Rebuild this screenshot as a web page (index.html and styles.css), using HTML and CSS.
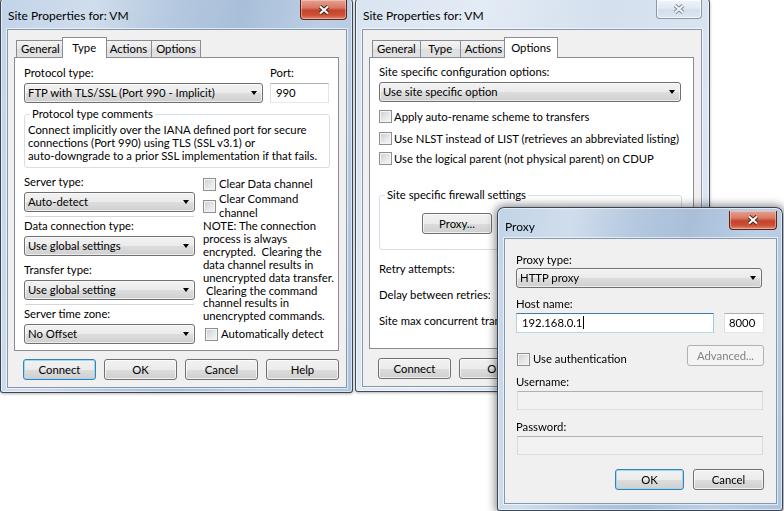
FILE: index.html
```html
<!DOCTYPE html>
<html lang="en">
<head>
    <meta charset="UTF-8">
    <meta name="viewport" content="width=device-width, initial-scale=1.0">
    <title>Site Properties for: VM</title>
    <link rel="stylesheet" href="styles.css">
</head>
<body>
    <div class="desktop">

        <!-- Type tab window -->
        <div class="window active win-type">
            <div class="titlebar">
                <span class="title">Site Properties for: VM</span>
                <span class="close-btn">
                    <svg width="12" height="10" viewBox="0 0 12 10"><path d="M2 1.5 L10 8.5 M10 1.5 L2 8.5" stroke="#4a1c14" stroke-width="4"/><path d="M2 1.5 L10 8.5 M10 1.5 L2 8.5" stroke="#fff" stroke-width="2.2"/></svg>
                </span>
            </div>
            <div class="client">
                <div class="tabs">
                    <span class="tab">General</span>
                    <span class="tab selected">Type</span>
                    <span class="tab">Actions</span>
                    <span class="tab">Options</span>
                </div>
                <div class="page">
                    <div class="row">
                        <div class="field protocol">
                            <div class="label">Protocol type:</div>
                            <div class="combo">FTP with TLS/SSL (Port 990 - Implicit)</div>
                        </div>
                        <div class="field port">
                            <div class="label">Port:</div>
                            <div class="edit">990</div>
                        </div>
                    </div>

                    <fieldset class="group comments">
                        <legend>Protocol type comments</legend>
                        <p>Connect implicitly over the IANA defined port for secure<br>connections (Port 990) using TLS (SSL v3.1) or<br>auto-downgrade to a prior SSL implementation if that fails.</p>
                    </fieldset>

                    <div class="split">
                        <div class="col-left">
                            <div class="field">
                                <div class="label">Server type:</div>
                                <div class="combo rule">Auto-detect</div>
                            </div>
                            <div class="field">
                                <div class="label">Data connection type:</div>
                                <div class="combo">Use global settings</div>
                            </div>
                            <div class="field">
                                <div class="label">Transfer type:</div>
                                <div class="combo rule">Use global setting</div>
                            </div>
                            <div class="field">
                                <div class="label">Server time zone:</div>
                                <div class="combo">No Offset</div>
                            </div>
                        </div>
                        <div class="col-right">
                            <div class="check-row"><span class="check"></span><span>Clear Data channel</span></div>
                            <div class="check-row two"><span class="check"></span><span>Clear Command<br>channel</span></div>
                            <p class="note">NOTE: The connection<br>process is always<br>encrypted.&nbsp; Clearing the<br>data channel results in<br>unencrypted data transfer.<br>&nbsp;Clearing the command<br>channel results in<br>unencrypted commands.</p>
                            <div class="check-row auto"><span class="check"></span><span>Automatically detect</span></div>
                        </div>
                    </div>
                </div>
                <div class="buttons">
                    <span class="btn default">Connect</span>
                    <span class="btn">OK</span>
                    <span class="btn">Cancel</span>
                    <span class="btn">Help</span>
                </div>
            </div>
        </div>

        <!-- Options tab window -->
        <div class="window inactive win-options">
            <div class="titlebar">
                <span class="title">Site Properties for: VM</span>
                <span class="close-btn">
                    <svg width="12" height="10" viewBox="0 0 12 10"><path d="M2 1.5 L10 8.5 M10 1.5 L2 8.5" stroke="#7d8898" stroke-width="4"/><path d="M2 1.5 L10 8.5 M10 1.5 L2 8.5" stroke="#eef2f7" stroke-width="2.2"/></svg>
                </span>
            </div>
            <div class="client">
                <div class="tabs">
                    <span class="tab">General</span>
                    <span class="tab">Type</span>
                    <span class="tab">Actions</span>
                    <span class="tab selected">Options</span>
                </div>
                <div class="page page-options">
                    <div class="label">Site specific configuration options:</div>
                    <div class="combo wide">Use site specific option</div>
                    <div class="check-row opt"><span class="check"></span><span>Apply auto-rename scheme to transfers</span></div>
                    <div class="check-row opt"><span class="check"></span><span>Use NLST instead of LIST (retrieves an abbreviated listing)</span></div>
                    <div class="check-row opt last"><span class="check"></span><span>Use the logical parent (not physical parent) on CDUP</span></div>

                    <fieldset class="group firewall">
                        <legend>Site specific firewall settings</legend>
                        <div class="fw-buttons">
                            <span class="btn">Proxy...</span>
                            <span class="btn"></span>
                        </div>
                    </fieldset>

                    <div class="label retry">Retry attempts:</div>
                    <div class="label retry">Delay between retries:</div>
                    <div class="label retry">Site max concurrent tran</div>
                </div>
                <div class="buttons">
                    <span class="btn">Connect</span>
                    <span class="btn">OK</span>
                    <span class="btn"></span>
                    <span class="btn"></span>
                </div>
            </div>
        </div>

        <!-- Proxy dialog -->
        <div class="window active win-proxy">
            <div class="titlebar">
                <span class="title">Proxy</span>
                <span class="close-btn">
                    <svg width="12" height="10" viewBox="0 0 12 10"><path d="M2 1.5 L10 8.5 M10 1.5 L2 8.5" stroke="#4a1c14" stroke-width="4"/><path d="M2 1.5 L10 8.5 M10 1.5 L2 8.5" stroke="#fff" stroke-width="2.2"/></svg>
                </span>
            </div>
            <div class="client proxy-client">
                <div class="label">Proxy type:</div>
                <div class="combo">HTTP proxy</div>

                <div class="label host-label">Host name:</div>
                <div class="host-row">
                    <div class="edit host focus">192.168.0.1<span class="caret"></span></div>
                    <div class="edit port-edit">8000</div>
                </div>

                <div class="auth-row">
                    <div class="check-row"><span class="check"></span><span>Use authentication</span></div>
                    <span class="btn disabled">Advanced...</span>
                </div>

                <div class="label user-label">Username:</div>
                <div class="edit disabled"></div>
                <div class="label pass-label">Password:</div>
                <div class="edit disabled"></div>

                <div class="buttons proxy-buttons">
                    <span class="btn default ok">OK</span>
                    <span class="btn cancel">Cancel</span>
                </div>
            </div>
        </div>

    </div>
</body>
</html>
```

FILE: styles.css
```css
* {
  box-sizing: border-box;
}

body {
  margin: 0;
  width: 784px;
  height: 511px;
  overflow: hidden;
  background-color: #fff;
  font-family: "Lato", "Liberation Sans", sans-serif;
  font-size: 11.3px;
  color: #000;
}

.desktop {
  position: relative;
  width: 784px;
  height: 511px;
}

/* 창 프레임 */
.window {
  position: absolute;
  display: flex;
  flex-direction: column;
  padding: 0 5px 4px 6px;
  border: 1px solid rgba(25, 35, 50, 0.8);
  border-radius: 7px 7px 3px 3px;
  box-shadow: inset 0 0 0 1px rgba(255, 255, 255, 0.55), 0 1px 3px rgba(0, 0, 0, 0.3);
}

.window.active {
  background: linear-gradient(100deg, #c2d4e8 0%, #d0ddec 22%, #b4c8df 42%, #a9bfd9 58%, #bccfe5 78%, #aec4dd 100%);
}

.window.inactive {
  background: linear-gradient(100deg, #d9e4f1 0%, #e3ebf5 30%, #d4e0ee 60%, #dce6f2 100%);
}

.win-type {
  left: 0;
  top: -4px;
  width: 353px;
  height: 397px;
}

.win-options {
  left: 355px;
  top: -4px;
  width: 355px;
  height: 396px;
  padding-right: 7px;
}

.win-proxy {
  left: 497px;
  top: 207px;
  width: 286px;
  height: 304px;
  padding-bottom: 6px;
  background: linear-gradient(100deg, rgba(186, 206, 230, 0.8) 0%, rgba(204, 219, 237, 0.78) 35%, rgba(178, 198, 223, 0.82) 65%, rgba(196, 212, 232, 0.85) 100%);
  backdrop-filter: blur(3px);
  box-shadow: inset 0 0 0 1px rgba(255, 255, 255, 0.55), 0 0 9px 2px rgba(0, 0, 0, 0.45);
}

.titlebar {
  display: flex;
  align-items: flex-start;
  height: 32px;
  flex: none;
}

.win-proxy .titlebar {
  height: 30px;
}

.title {
  margin: 11px 0 0 1px;
  font-size: 12px;
  line-height: 15px;
  white-space: nowrap;
}

.close-btn {
  display: flex;
  align-items: center;
  justify-content: center;
  margin-left: auto;
  margin-top: 3px;
  width: 47px;
  height: 20px;
  border: 1px solid #5e2318;
  border-top: none;
  border-radius: 0 0 4px 4px;
  background: linear-gradient(#e6a192 0%, #d67a64 40%, #c5432b 55%, #cb5136 80%, #dd8a70 100%);
  box-shadow: inset 0 0 0 1px rgba(255, 220, 210, 0.45);
}

.inactive .close-btn {
  width: 46px;
  height: 19px;
  border-color: #8a97a8;
  background: linear-gradient(#f1f5fa 0%, #e1e9f3 45%, #d3deeb 55%, #dde6f1 100%);
  box-shadow: inset 0 0 0 1px rgba(255, 255, 255, 0.7);
}

.win-proxy .close-btn {
  width: 48px;
  height: 19px;
}

/* 클라이언트 영역 */
.client {
  flex: 1;
  display: flex;
  flex-direction: column;
  padding: 7px 7px 0 6px;
  background-color: #f0f0f0;
  border: 1px solid #8597ad;
  box-shadow: 0 0 0 1px rgba(255, 255, 255, 0.6);
}

.tabs {
  display: flex;
  align-items: flex-end;
  height: 21px;
  padding-left: 2px;
  margin-bottom: -1px;
  position: relative;
  z-index: 1;
  flex: none;
}

.win-options .tabs {
  padding-left: 3px;
}

.tab {
  min-width: 41px;
  height: 17px;
  margin-bottom: 1px;
  margin-right: -1px;
  padding: 0 4px;
  line-height: 16px;
  text-align: center;
  border: 1px solid #898c95;
  border-bottom: none;
  background: linear-gradient(#f4f4f4 0%, #e8e8e8 50%, #dedede 51%, #e2e2e2 100%);
  white-space: nowrap;
}

.tab.selected {
  min-width: 45px;
  height: 21px;
  margin: 0 -2px 0 -2px;
  padding: 0 6px;
  line-height: 19px;
  background: #fff;
  position: relative;
  z-index: 1;
}

.page {
  flex: none;
  height: 294px;
  padding: 7px 9px 0 9px;
  background-color: #fff;
  border: 1px solid #898c95;
}

.page-options {
  height: 292px;
  padding-top: 6px;
}

.label {
  line-height: 15px;
  white-space: nowrap;
}

.row {
  display: flex;
  gap: 7px;
}

.protocol {
  width: 239px;
}

.port {
  width: 59px;
}

/* 콤보박스 */
.combo {
  position: relative;
  height: 20px;
  margin-top: 3px;
  padding-left: 3px;
  line-height: 18px;
  white-space: nowrap;
  border: 1px solid #707070;
  border-radius: 3px;
  background: linear-gradient(#f2f2f2 0%, #ebebeb 50%, #dddddd 51%, #cfcfcf 100%);
  box-shadow: inset 0 0 0 1px rgba(255, 255, 255, 0.6);
}

.combo::after {
  content: "";
  position: absolute;
  right: 5px;
  top: 7px;
  border-left: 3.5px solid transparent;
  border-right: 3.5px solid transparent;
  border-top: 4px solid #000;
}

.combo.rule::before {
  content: "";
  position: absolute;
  left: 0;
  right: 0;
  bottom: -6px;
  height: 1px;
  background-color: #d6d6d6;
}

.combo.wide {
  width: 302px;
}

.edit {
  height: 20px;
  margin-top: 3px;
  padding-left: 5px;
  line-height: 18px;
  white-space: nowrap;
  background-color: #fff;
  border: 1px solid;
  border-color: #abadb3 #e2e3ea #e3e9ef #dbdfe6;
}

/* 그룹박스 */
.group {
  margin: 0;
  min-width: 0;
  padding: 0 3px 5px 3px;
  border: 1px solid #d5dfe5;
  border-radius: 3px;
}

.group legend {
  padding: 0 2px;
  margin-left: 2px;
  line-height: 14px;
}

.comments {
  width: 306px;
  margin-top: 4px;
}

.comments p {
  margin: 2px 0 0;
  line-height: 13px;
  white-space: nowrap;
}

.split {
  display: flex;
  gap: 8px;
  margin-top: 6px;
}

.col-left {
  width: 171px;
  flex: none;
}

.col-left .field + .field {
  margin-top: 6px;
}

.col-right {
  flex: 1;
  padding-top: 3px;
}

/* 체크박스 */
.check-row {
  display: flex;
  align-items: center;
  gap: 3px;
  line-height: 14px;
  white-space: nowrap;
}

.check {
  flex: none;
  width: 13px;
  height: 13px;
  border: 1px solid #8e8f8f;
  background: linear-gradient(135deg, #c9ccd1 0%, #e6e7e9 55%, #f6f6f6 100%);
  box-shadow: inset 0 0 0 1px #f4f4f4;
}

.check-row.two {
  margin-top: 1px;
}

.note {
  margin: 0;
  line-height: 12.9px;
  white-space: nowrap;
}

.check-row.auto {
  margin-top: 4px;
  padding-left: 2px;
}

.opt {
  gap: 2px;
  margin-top: 7px;
  line-height: 15px;
}

.opt.last {
  margin-top: 5px;
}

.firewall {
  width: 303px;
  margin-top: 22px;
  padding-bottom: 15px;
}

.fw-buttons {
  display: flex;
  gap: 71px;
  margin: 11px 0 0 39px;
}

.fw-buttons .btn {
  width: 70px;
}

.retry {
  margin-top: 11px;
}

/* 버튼 */
.buttons {
  display: flex;
  justify-content: flex-end;
  gap: 8px;
  margin-top: 8px;
}

.win-options .buttons {
  margin-top: 9px;
}

.btn {
  width: 73px;
  height: 21px;
  line-height: 19px;
  text-align: center;
  white-space: nowrap;
  border: 1px solid #707070;
  border-radius: 3px;
  background: linear-gradient(#f2f2f2 0%, #ebebeb 50%, #dddddd 51%, #cfcfcf 100%);
  box-shadow: inset 0 0 0 1px rgba(255, 255, 255, 0.7);
}

.btn.default {
  border-color: #3c7fb1;
  box-shadow: inset 0 0 0 1px #9ed8f6;
}

.btn.disabled {
  width: 77px;
  color: #838383;
  border-color: #adb2b5;
  background: #f4f4f4;
  box-shadow: none;
}

/* Proxy 대화상자 */
.proxy-client {
  padding: 13px 12px 0 11px;
}

.proxy-client .combo {
  width: 246px;
  margin-top: 1px;
}

.host-label {
  margin-top: 8px;
}

.host-row {
  display: flex;
  gap: 10px;
  margin-top: 2px;
}

.host-row .edit {
  margin-top: 0;
}

.host {
  width: 198px;
}

.edit.focus {
  border-color: #3d7bad #a4c9e3 #b7d9ed #b5cfe7;
}

.caret {
  display: inline-block;
  width: 1px;
  height: 13px;
  margin-left: 1px;
  vertical-align: -2px;
  background-color: #000;
}

.port-edit {
  width: 40px;
  padding-left: 4px;
}

.auth-row {
  display: flex;
  justify-content: space-between;
  align-items: flex-end;
  margin-top: 12px;
  padding-left: 1px;
}

.user-label {
  margin-top: 8px;
}

.pass-label {
  margin-top: 9px;
}

.edit.disabled {
  width: 246px;
  height: 19px;
  margin: 2px 0 0 1px;
  background-color: #f2f2f2;
  border-color: #adb2b5 #d6d8da #dcdfe1 #d6d8da;
}

.proxy-buttons {
  gap: 9px;
  margin-top: 14px;
}

.btn.ok {
  width: 69px;
}

.btn.cancel {
  width: 71px;
}
```
